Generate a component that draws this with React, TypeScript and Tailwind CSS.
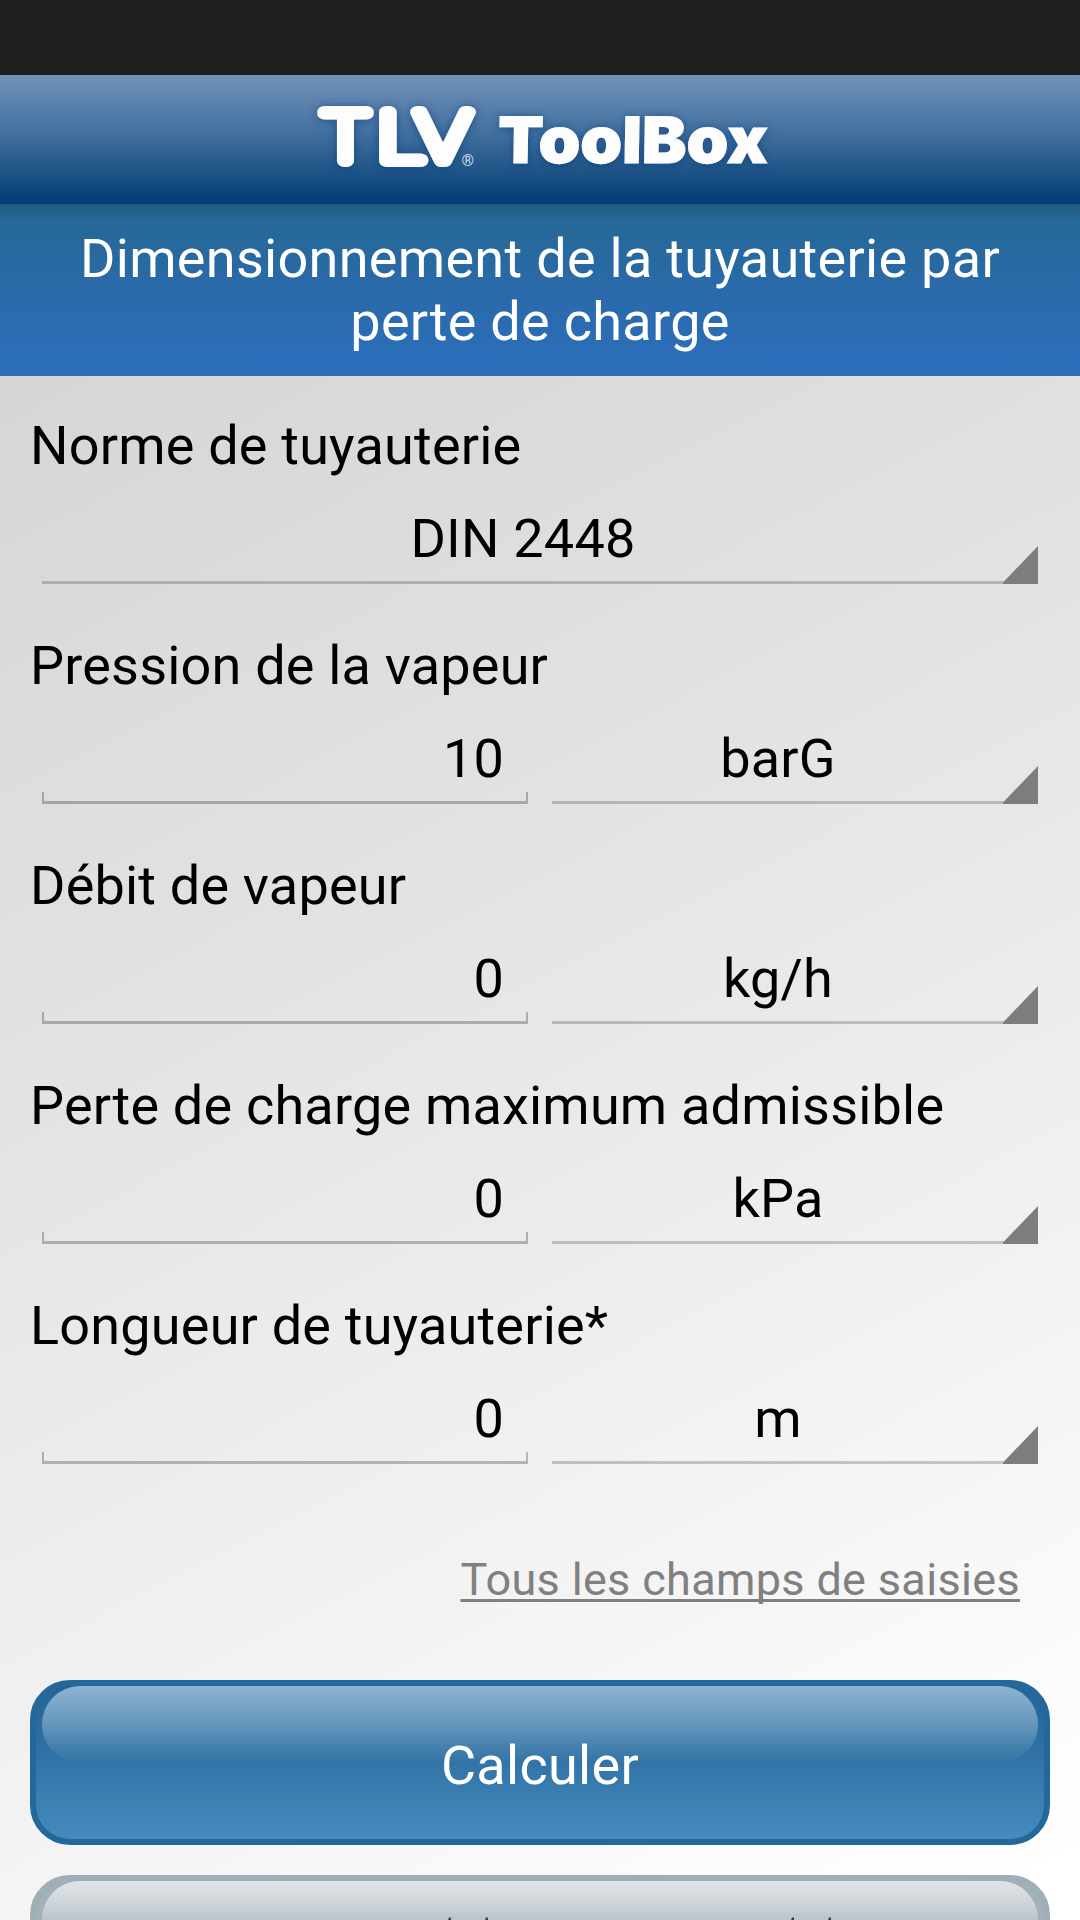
import { useState } from "react";

type Field = {
  id: string;
  label: string;
  value?: string;
  unit: string;
};

const fields: Field[] = [
  { id: "norm", label: "Norme de tuyauterie", unit: "DIN 2448" },
  { id: "pressure", label: "Pression de la vapeur", value: "10", unit: "barG" },
  { id: "flow", label: "Débit de vapeur", value: "0", unit: "kg/h" },
  { id: "drop", label: "Perte de charge maximum admissible", value: "0", unit: "kPa" },
  { id: "length", label: "Longueur de tuyauterie*", value: "0", unit: "m" },
];

function Logo() {
  return (
    <svg width="500" height="129" viewBox="290 75 500 129" className="block">
      <defs>
        <filter id="glow" x="-20%" y="-40%" width="140%" height="180%">
          <feDropShadow dx="0" dy="1" stdDeviation="5" floodColor="#12407f" floodOpacity="0.7" />
        </filter>
      </defs>
      <g filter="url(#glow)" fill="#fdfdfe" stroke="#fdfdfe">
        <g
          fontFamily="Inter, sans-serif"
          fontWeight="100"
          fontSize="67"
          strokeWidth="12"
          strokeLinejoin="round"
        >
          <text x="319.5" y="161" textLength="52" lengthAdjust="spacingAndGlyphs">T</text>
          <text x="377" y="161" textLength="49" lengthAdjust="spacingAndGlyphs">L</text>
          <text x="415" y="161" textLength="56" lengthAdjust="spacingAndGlyphs">V</text>
        </g>
        <text
          x="0"
          y="0"
          transform="translate(497.5 162.7) skewX(-1)"
          fontFamily="Inter, sans-serif"
          fontWeight="900"
          fontSize="64"
          strokeWidth="1"
          textLength="270"
          lengthAdjust="spacingAndGlyphs"
        >
          ToolBox
        </text>
      </g>
      <text x="461.5" y="166" fontFamily="Roboto, sans-serif" fontSize="16" fill="#c9d6e8">
        ®
      </text>
    </svg>
  );
}

function Spinner({ text }: { text: string }) {
  return (
    <div className="relative h-[107px] border-b-[3px] border-black/20 pt-[30px] pr-[34px] text-center">
      {text}
      <svg width="35" height="38" viewBox="0 0 35 38" className="absolute right-0 -bottom-[3px]">
        <path d="M35 0V38H0V36.500Z" fill="#7d7d7d" />
      </svg>
    </div>
  );
}

function NumberInput({ value, onChange }: { value: string; onChange: (v: string) => void }) {
  return (
    <div className="relative h-[107px] pt-[30px]">
      <input
        value={value}
        onChange={(e) => onChange(e.target.value)}
        className="block h-[63px] w-full bg-transparent pr-6 text-right outline-none"
      />
      <div className="absolute inset-x-0 bottom-0 h-3 border-x-2 border-b-[3px] border-black/25" />
    </div>
  );
}

export default function App() {
  const [values, setValues] = useState<Record<string, string>>(
    Object.fromEntries(fields.map((f) => [f.id, f.value ?? ""]))
  );

  return (
    <div className="flex h-[1920px] w-[1080px] flex-col overflow-hidden bg-[linear-gradient(153deg,#d5d5d5_14%,#e2e2e2_43%,#ffffff_97%)] font-['Roboto',sans-serif] text-[54px] leading-[63px] tracking-[0.2px] text-black">
      <div className="h-[75px] shrink-0 bg-[#1f1f1f]" />

      <header className="flex h-[129px] shrink-0 justify-center bg-[linear-gradient(#7393b9,#42709f_45%,#003c73)] tracking-normal">
        <Logo />
      </header>

      <h1 className="h-[172px] shrink-0 bg-[linear-gradient(#205a80,#266896_9%,#2a6aaa_50%,#2c6fbc)] pt-[23px] text-center tracking-[0.3px] text-white">
        Dimensionnement de la tuyauterie par
        <br />
        perte de charge
      </h1>

      <main className="flex flex-col px-[30px] pt-[38px]">
        {fields.map((f) => (
          <section key={f.id} className="h-[220px]">
            <label className="block h-[63px] whitespace-nowrap">{f.label}</label>
            {f.value === undefined ? (
              <div className="px-3">
                <Spinner text={f.unit} />
              </div>
            ) : (
              <div className="grid grid-cols-2 gap-6 px-3">
                <NumberInput
                  value={values[f.id]}
                  onChange={(v) => setValues({ ...values, [f.id]: v })}
                />
                <Spinner text={f.unit} />
              </div>
            )}
          </section>
        ))}

        <a className="mt-[39px] mr-[30px] self-end text-[45px] leading-[53px] tracking-[0.33px] text-[#808080] underline decoration-[3px] underline-offset-[4px] [text-decoration-skip-ink:none]">
          Tous les champs de saisies
        </a>

        <button className="relative mt-[74px] h-[165px] shrink-0 rounded-[40px] border-[6px] border-[#24679a] bg-[linear-gradient(#236497,#3173a6_48%,#458bbd)] tracking-[0.3px] text-white">
          <span className="absolute inset-x-[6px] top-0 h-[77px] rounded-[38px] bg-[linear-gradient(#8fb4d1,#5f93ba_55%,#3073a600)]" />
          <span className="relative top-[3px]">Calculer</span>
        </button>

        <button className="relative mt-[30px] h-[165px] shrink-0 rounded-[40px] border-[6px] border-[#9fafb6] bg-[#a2b0b8]">
          <span className="absolute inset-x-[6px] top-0 h-[77px] rounded-[38px] bg-[linear-gradient(#dfe5e9,#cfd5d8_28%,#b6c4cb_52%,#a2b0b8)]" />
          {/* only the accent tips of the label clear the fold */}
          <svg width="384" height="3" viewBox="0 0 384 3" className="absolute top-[36px] left-[411px]">
            <path
              d="M1 3L2 0.500H4V3ZM38 3L39 0.500H41V3ZM344 3L345 0.500H347V3ZM381 3L382 0.500H384V3Z"
              fill="#34424a"
            />
          </svg>
        </button>
      </main>
    </div>
  );
}
